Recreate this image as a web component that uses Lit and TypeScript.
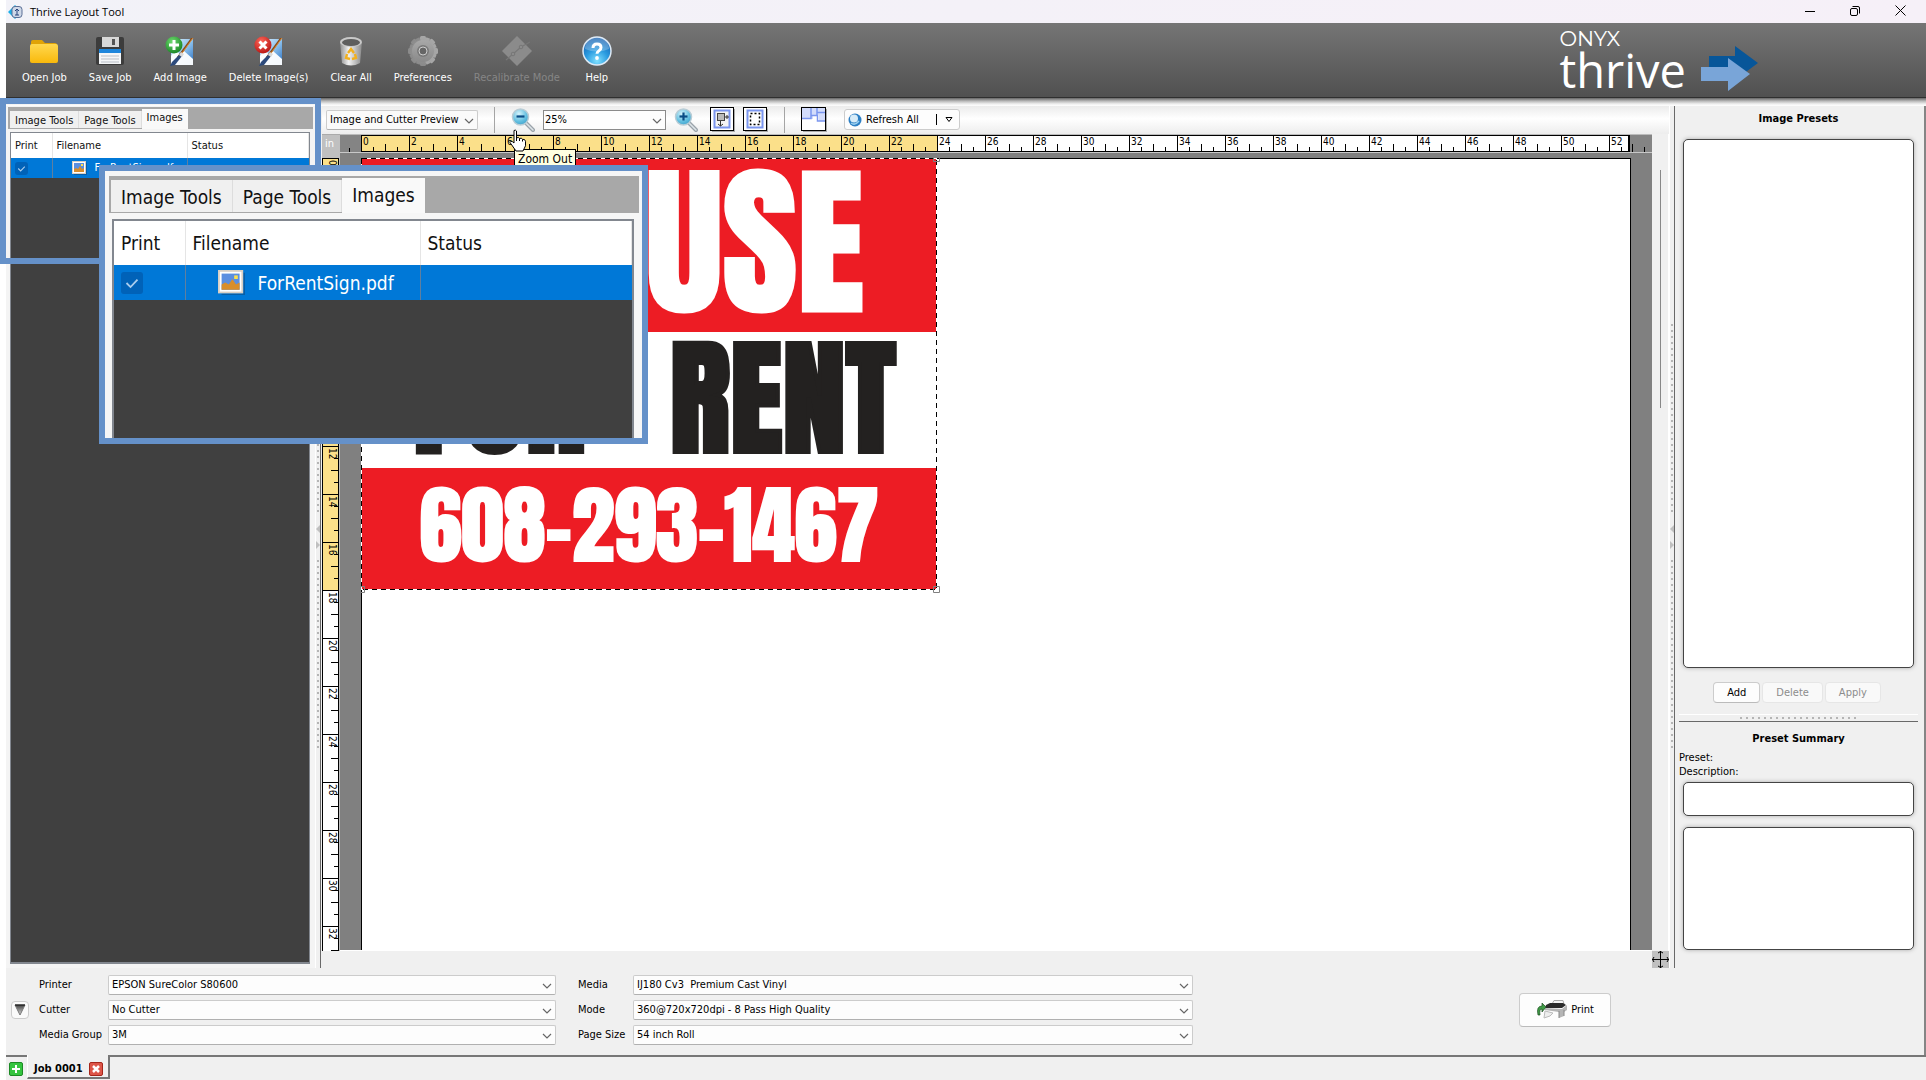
import { LitElement, html, svg, css } from "lit";
import { customElement, state } from "lit/decorators.js";

const chevron = html`<svg class="chev" width="10" height="6" viewBox="0 0 10 6"><path d="M1 1l4 4 4-4" fill="none" stroke="#666" stroke-width="1.2"/></svg>`;

const brush = svg`
  <path d="M6 3h22v26H6z" fill="url(#sky)"/><path d="M6 29V20l5-7 4 6 4-4 9 8v6z" fill="#fff" opacity=".95"/>
  <path d="M28 2L14 22l-2-1L26 2z" fill="#8a4b16"/><path d="M28 2L15 20" stroke="#d98b3a" stroke-width="1"/>
  <path d="M15 18l2 2-7 9-5 1 2-4z" fill="#2c4a7c"/><path d="M16 16l3 2-2 3-3-2z" fill="#d9d9d9"/>`;

const defs = svg`<defs>
  <linearGradient id="sky" x1="0" y1="0" x2="1" y2="1"><stop offset="0" stop-color="#e8f3fc"/><stop offset=".5" stop-color="#8fc3ee"/><stop offset="1" stop-color="#2a6fc0"/></linearGradient>
  <linearGradient id="gold" x1="0" y1="0" x2="0" y2="1"><stop offset="0" stop-color="#ffd84f"/><stop offset="1" stop-color="#f9b90c"/></linearGradient>
  <linearGradient id="tin" x1="0" y1="0" x2="1" y2="0"><stop offset="0" stop-color="#8e8e8e"/><stop offset=".4" stop-color="#f2f2f2"/><stop offset="1" stop-color="#8a8a8a"/></linearGradient>
  <linearGradient id="gear" x1="0" y1="0" x2="0" y2="1"><stop offset="0" stop-color="#a8a8a8"/><stop offset="1" stop-color="#8a8a8a"/></linearGradient>
  <radialGradient id="blue" cx=".5" cy=".85" r=".8"><stop offset="0" stop-color="#7fe0ff"/><stop offset=".5" stop-color="#2a9be0"/><stop offset="1" stop-color="#1560b0"/></radialGradient>
  <radialGradient id="green" cx=".4" cy=".3" r=".8"><stop offset="0" stop-color="#6fdc6f"/><stop offset="1" stop-color="#0f7a1c"/></radialGradient>
  <radialGradient id="red" cx=".4" cy=".3" r=".8"><stop offset="0" stop-color="#ff6a5c"/><stop offset="1" stop-color="#b00a0a"/></radialGradient>
</defs>`;

const icons: Record<string, unknown> = {
  open: svg`<path d="M2 6q0-2 2-2h9l3 3h10q2 0 2 2v2H2z" fill="#e0a307"/><rect x="1" y="8" width="28" height="19" rx="2" fill="url(#gold)"/>`,
  save: svg`<rect x="1" y="1" width="28" height="28" rx="2" fill="#3c3c3c"/><rect x="7" y="1" width="17" height="10" fill="#d8d8d8"/><rect x="17" y="3" width="3" height="6" fill="#555"/><rect x="4" y="13" width="22" height="15" fill="#f4f6f8"/><rect x="4" y="13" width="22" height="4" fill="#1d86dc"/><path d="M6 20h18M6 23h18M6 26h18" stroke="#b9bfc6"/>`,
  add: svg`${brush}<circle cx="9" cy="9" r="8.500" fill="url(#green)"/><path d="M9 4v10M4 9h10" stroke="#fff" stroke-width="3"/>`,
  del: svg`${brush}<circle cx="9" cy="9" r="8.500" fill="url(#red)"/><path d="M5.500 5.500l7 7M12.500 5.500l-7 7" stroke="#fff" stroke-width="3"/>`,
  clear: svg`<path d="M4 6l2 21q9 5 18 0l2-21z" fill="url(#tin)"/><ellipse cx="15" cy="6" rx="11" ry="5" fill="#c9c9c9"/><ellipse cx="15" cy="6.500" rx="9" ry="3.500" fill="#5e5e5e"/><path d="M12 17l3-4 3 4M19 18l1 4-4 1M11 18l-1 4 4 1" fill="none" stroke="#f2b01e" stroke-width="2.400"/>`,
  prefs: svg`<g fill="url(#gear)">${[0, 45, 90, 135].map(a => svg`<rect x="12" y="0" width="6" height="30" rx="1.500" transform="rotate(${a} 15 15)"/>`)}${[22, 67, 112, 157].map(a => svg`<rect x="13" y="1" width="4" height="28" transform="rotate(${a} 15 15)"/>`)}<circle cx="15" cy="15" r="11"/></g><circle cx="15" cy="15" r="6" fill="#7a7a7a"/><circle cx="15" cy="15" r="4" fill="#666" stroke="#cdcdcd"/>`,
  recal: svg`<path d="M15 0l15 15-15 15L0 15z" fill="#8b8b8b"/><path d="M4 24l7-6 8-7 9-5" fill="none" stroke="#777" stroke-width="1.200"/><circle cx="11" cy="18" r="1.800" fill="#8b8b8b" stroke="#777"/><circle cx="19" cy="11" r="1.800" fill="#8b8b8b" stroke="#777"/>`,
  help: svg`<circle cx="15" cy="15" r="14" fill="url(#blue)" stroke="#dce9f5" stroke-width="1.500"/><path d="M3 13a12 12 0 0 1 24 0q-12 5-24 0z" fill="#fff" opacity=".25"/><path d="M11 12q0-4 4-4t4 3.500q0 2-2 3.200t-2 3" fill="none" stroke="#fff" stroke-width="3"/><circle cx="15" cy="22" r="1.900" fill="#fff"/>`,
};

const lens = (plus: boolean) => html`<svg width="24" height="24" viewBox="0 0 24 24">
  <defs><radialGradient id="ln" cx=".4" cy=".3" r=".8"><stop offset="0" stop-color="#d5f3fb"/><stop offset=".6" stop-color="#62bfe0"/><stop offset="1" stop-color="#3b9cc8"/></radialGradient></defs>
  <path d="M15 15l7 7" stroke="#9aa3aa" stroke-width="4" stroke-linecap="round"/><path d="M15 15l7 7" stroke="#dfe5e9" stroke-width="1.500" stroke-linecap="round"/>
  <circle cx="9.500" cy="9" r="8" fill="url(#ln)" stroke="#b9cdd6" stroke-width="1.500"/><path d="M5.500 8.500h8" stroke="#0a4d86" stroke-width="2.200"/>${plus ? svg`<path d="M9.500 4.500v8" stroke="#0a4d86" stroke-width="2.200"/>` : ""}</svg>`;

const photo = html`<svg class="photo" viewBox="0 0 15 14"><path d="M2 13.500h12.500V1.500" fill="none" stroke="#0b4d86" stroke-opacity=".6"/><rect x=".5" y=".5" width="13" height="12" fill="#fff" stroke="#d8cfc4"/><rect x="2" y="2" width="10" height="9" fill="#5b8fe0"/><path d="M2 11V8l2-1 2 1 2-3 2 3 2-1v4z" fill="#d98e2b"/><rect x="9" y="3" width="2" height="2" fill="#ffe14a"/></svg>`;

@customElement("images-panel")
class ImagesPanel extends LitElement {
  static styles = css`
    :host { display: flex; flex-direction: column; box-sizing: border-box; color: #111; font: var(--fs)/var(--lh) "DejaVu Sans Condensed", "Noto Sans", sans-serif; }
    .tabs { display: flex; align-items: flex-end; height: var(--bar); padding-left: 2px; background: #a8a8a8; flex: none; }
    .tab { font: inherit; color: inherit; border: 0; padding: 2px var(--tp) 0; height: var(--tab); background: #f0f0f0; border-right: 1px solid #ddd; margin-bottom: 1px; white-space: nowrap; }
    .tab.on { height: var(--tabon); background: #f9f9f9; margin-bottom: 0; border-right: 0; padding-top: 0; padding-bottom: 2px; }
    .frame { flex: 1; min-height: 0; overflow: hidden; margin: var(--ft) var(--fr) 0 var(--fl); border: var(--fb) solid #82878f; border-bottom-width: var(--bb); background: #404040; }
    table { width: 100%; border-collapse: collapse; table-layout: fixed; }
    .c1 { width: var(--c1); } .c2 { width: var(--c2); }
    th, td { padding: 0 0 0 var(--cp); text-align: left; font-weight: 400; white-space: nowrap; overflow: hidden; border-right: 1px solid #e5e5e5; }
    th { height: var(--hh); background: #fff; }
    td { height: var(--rh); background: #0078d7; color: #fff; border-right-color: #5f7f9f; }
    td:last-child { border-right: 0; }
    td.name { padding-left: var(--np); }
    .file { display: flex; align-items: center; gap: var(--ng); }
    .photo { width: var(--iw); height: auto; flex: none; }
    .box { display: block; appearance: none; margin: 0; width: var(--cb); height: var(--cb); border-radius: 3px; background: #0062b8 url('data:image/svg+xml,<svg xmlns="http://www.w3.org/2000/svg" viewBox="0 0 12 12"><path d="M3 6l2.200 2.200L9 4.200" fill="none" stroke="%23a9cdee"/></svg>') center / 100% no-repeat; }
  `;
  render() {
    return html`<div class="tabs" role="tablist"><button class="tab" role="tab">Image Tools</button><button class="tab" role="tab">Page Tools</button><button class="tab on" role="tab">Images</button></div>
    <div class="frame"><table><colgroup><col class="c1"><col class="c2"><col></colgroup>
      <thead><tr><th>Print</th><th>Filename</th><th>Status</th></tr></thead>
      <tbody><tr><td><input class="box" type="checkbox" checked aria-label="Print ForRentSign.pdf"></td><td class="name"><span class="file">${photo}<span>ForRentSign.pdf</span></span></td><td></td></tr></tbody></table></div>`;
  }
}

@customElement("app-root")
class AppRoot extends LitElement {
  static styles = css`
    :host { display: block; color: #000; font: 11px/14px "DejaVu Sans Condensed", "Noto Sans", sans-serif; }
    * { box-sizing: border-box; }
    button, select, textarea { font: inherit; color: inherit; }
    svg { display: block; }
    .app { position: relative; display: flex; flex-direction: column; height: 100vh; min-height: 760px; padding-left: 6px; background: #fff; overflow: hidden; }
    .title { display: flex; align-items: center; height: 23px; padding: 0 18px 0 2px; background: linear-gradient(90deg, #f2f2f8, #f6f0f8); font: 11px/16px "Open Sans", sans-serif; gap: 6px; }
    .wins { display: flex; gap: 29px; margin-left: auto; padding-bottom: 2px; }
    .winb { border: 0; background: none; padding: 0; width: 16px; height: 16px; display: grid; place-items: center; }
    .tools { display: flex; align-items: flex-start; gap: 22px; height: 75px; padding: 13px 0 0 16px; background: linear-gradient(#757575, #505050); border-bottom: 1px solid #2f2f2f; color: #fff; }
    .tool { border: 0; background: none; padding: 0; display: flex; flex-direction: column; align-items: center; gap: 5px; white-space: nowrap; }
    .tool:disabled { color: #868686; }
    .brand { display: flex; align-items: flex-end; gap: 15px; margin: -7px 168px 0 auto; }
    .words { font-family: "Open Sans", sans-serif; }
    .onyx { font: 21px/20px "Montserrat", "DejaVu Sans", sans-serif; }
    .thrive { font-size: 47px; line-height: 42px; }
    .shade { height: 8px; background: linear-gradient(#666, #bbb 40%, #f0f0f0 75%, #fff); flex: none; }
    .body { flex: 1; min-height: 0; display: flex; background: #f0f0f0; border-right: 2px solid #858585; }
    .side { width: 309px; padding: 1px 2px 4px; background: #f4f4f4; --fs: 11px; --lh: 14px; --bar: 22px; --tab: 17px; --tabon: 20px; --tp: 5px; --ft: 3px; --fl: 2px; --fr: 3px; --fb: 1px; --bb: 2px; --c1: 41px; --c2: 135px; --cp: 4px; --hh: 25px; --rh: 20px; --np: 19px; --ng: 8px; --iw: 15px; --cb: 13px; }
    .split { width: 6px; display: flex; flex-direction: column; justify-content: center; align-items: center; gap: 11px; border-right: 1px solid #696969; border-left: 1px solid #fff; flex: none; }
    .dots { width: 2px; height: 190px; background: repeating-linear-gradient(#b5b5b5 0 2px, transparent 2px 6px); }
    .center { flex: 1; min-width: 0; display: flex; flex-direction: column; padding-left: 1px; }
    .bar { display: flex; align-items: center; height: 28px; padding: 0 0 1px 4px; background: linear-gradient(#ececec, #fff 45%, #ededed); }
    .sel { position: relative; display: block; }
    .sel select { appearance: none; display: block; width: 100%; height: 20px; padding: 0 20px 0 3px; border: 1px solid #ccc; border-bottom-color: #b0b0b0; border-radius: 2px; background: #fdfdfd; }
    .sel .chev { position: absolute; right: 4px; top: 8px; pointer-events: none; }
    .view { width: 152px; } .view select { padding-left: 3px; padding-right: 12px; background: #fafafa; }
    .zoom { width: 123px; } .zoom select { border-color: #8a8a8a; border-radius: 0; padding-left: 1px; }
    .rule { width: 1px; height: 26px; background: #a5a5a5; }
    .icon { border: 0; background: none; padding: 0; }
    .m8 { margin-left: 8px; } .m12 { margin-left: 12px; } .m16 { margin-left: 16px; }
    .refresh { display: flex; align-items: center; height: 21px; margin-left: 17px; border: 1px solid #ccc; border-radius: 3px; background: #fdfdfd; }
    .refresh .icon { display: flex; align-items: center; gap: 4px; padding: 0 0 0 3px; }
    .refresh .more { margin-left: 17px; padding: 0 6px 0 8px; border-left: 1px solid #000; height: 11px; }
    .work { flex: 1; min-height: 0; display: grid; grid-template: 19px 1fr 17px / 18px minmax(0, 1fr) 17px; }
    .unit { background: #c0c0c0; color: #fff; padding: 2px 0 0 3px; border-top: 1px solid #aaa; }
    .rulerh { display: flex; background: #848484; border-top: 1px solid #bbb; border-bottom: 1px solid #c8c8c8; }
    .lead { width: 21px; flex: none; } .tail { width: 22px; flex: none; }
    .scaleh { flex: 1; min-width: 0; border: 1px solid #000; border-right-width: 2px; background: #fff; overflow: hidden; }
    .rulerv { background: #c0c0c0; padding: 5px 1px 0 0; overflow: hidden; }
    .scalev { height: 100%; border: 1px solid #000; border-bottom: 0; background: #fff; overflow: hidden; }
    .num { font: 10px "DejaVu Sans Condensed", sans-serif; }
    .canvas { background: #808080; padding: 5px 21px 0 21px; overflow: hidden; border-bottom: 1px solid #fff; }
    .page { height: 100%; border: 1px solid #000; border-bottom: 0; background: #fff; }
    .sign { margin: -1px 0 0 -1px; overflow: visible; }
    .ink { font-family: "Anton", "Roboto Condensed", sans-serif; font-weight: 400; }
    .scroll { grid-row: 1 / 3; grid-column: 3; padding: 36px 7px 0 8px; border-right: 1px solid #fff; }
    .thumb { height: 238px; background: #888; }
    .blank { grid-column: 1 / 3; }
    .presets { width: 249px; padding: 6px 10px 18px 8px; display: flex; flex-direction: column; flex: none; }
    h2 { margin: 0; font: bold 11px/14px "DejaVu Sans Condensed", sans-serif; text-align: center; }
    .list { border: 1px solid #444; border-radius: 5px; background: #fff; box-shadow: 0 0 4px #aaa; resize: none; padding: 4px; display: block; width: 100%; outline: 0; }
    .grow { flex: 1; margin-top: 13px; min-height: 60px; }
    .desc { height: 34px; margin-top: 3px; } .more2 { height: 123px; margin-top: 11px; }
    .acts { display: flex; justify-content: center; gap: 2px; margin: 14px 3px 11px 0; }
    .btn { height: 21px; border: 1px solid #ccc; border-bottom-color: #bbb; border-radius: 4px; background: #fdfdfd; padding: 0 13px; }
    .btn:disabled { color: #8c8c8c; background: #f9f9f9; border-color: #e6e6e6; }
    .hsplit { height: 8px; margin: 0 -4px 10px; border-top: 1px solid #fff; border-bottom: 1px solid #696969; display: grid; place-items: center; }
    .hdots { width: 117px; height: 2px; background: repeating-linear-gradient(90deg, #b5b5b5 0 2px, transparent 2px 6px); }
    .lines { margin: 5px 0 0 -4px; }
    .setup { display: flex; align-items: center; height: 87px; padding: 0 313px 4px 5px; background: #f0f0f0; border-right: 2px solid #858585; flex: none; }
    .fold { width: 18px; height: 18px; padding: 0; border: 1px solid #ccc; border-radius: 4px; background: #fafafa; display: grid; place-items: center; margin-right: 10px; }
    .fields { display: grid; align-items: center; gap: 5px 0; }
    .f1 { grid-template-columns: 69px 448px; } .f2 { grid-template-columns: 55px 560px; margin-left: 22px; }
    .print { margin-left: auto; height: 34px; padding: 0 16px; display: flex; align-items: center; gap: 4px; }
    .jobs { display: flex; height: 25px; background: #f0f0f0; flex: none; }
    .edge { border-top: 2px solid #777; padding: 5px 4px 0 3px; }
    .job { display: flex; align-items: center; gap: 6px; padding: 6px 5px 0 6px; height: 24px; border-right: 2px solid #777; border-bottom: 2px solid #777; border-left: 1px solid #fff; font-weight: bold; background: #f0f0f0; }
    .rest { flex: 1; border-top: 2px solid #777; }
    .mark { position: absolute; left: 0; top: 98px; width: 321px; height: 166px; border: 6px solid #6591c9; pointer-events: none; }
    .popup { position: absolute; left: 99px; top: 165px; width: 549px; height: 279px; border: 6px solid #6591c9; background: #f6f6f6; padding: 5px 3px 0 4px; --fs: 19px; --lh: 24px; --bar: 37px; --tab: 32px; --tabon: 35px; --tp: 10px; --ft: 6px; --fl: 3px; --fr: 5px; --fb: 2px; --bb: 0px; --c1: 71px; --c2: 235px; --cp: 7px; --hh: 44px; --rh: 35px; --np: 32px; --ng: 13px; --iw: 27px; --cb: 22px; }
    .fill { height: 100%; }
    .tip { position: absolute; left: 514px; top: 149px; height: 19px; padding: 1px 3px; border: 1px solid #000; background: #ffffe1; font-size: 12px; line-height: 16px; }
    .hand { position: absolute; left: 509px; top: 129px; }
  `;

  @state() private tools = [
    ["open", "Open Job"], ["save", "Save Job"], ["add", "Add Image"], ["del", "Delete Image(s)"],
    ["clear", "Clear All"], ["prefs", "Preferences"], ["recal", "Recalibrate Mode"], ["help", "Help"],
  ];

  private combo(id: string, label: string, value: string) {
    return html`<label for=${id}>${label}</label><span class="sel"><select id=${id}><option>${value}</option></select>${chevron}</span>`;
  }

  private ticksH() {
    return svg`<rect x="0" y="0" width="576" height="17" fill="#fbe08a"/>${Array.from({ length: 106 }, (_, i) => {
      const x = i * 12, len = i % 4 === 0 ? 16 : i % 4 === 2 ? 7 : 4;
      return svg`<path d="M${x - 0.5} ${15 - len}v${len}" stroke="#000"/>${i % 4 === 0 ? svg`<text class="num" x="${x + 1}" y="9">${i / 2}</text>` : ""}`;
    })}`;
  }

  private ticksV() {
    return svg`<rect x="0" y="0" width="17" height="432" fill="#fbe08a"/>${Array.from({ length: 67 }, (_, i) => {
      const y = i * 12, len = i % 4 === 0 ? 16 : i % 4 === 2 ? 7 : 4;
      return svg`<path d="M${15 - len} ${y - 0.5}h${len}" stroke="#000"/>${i % 4 === 0 ? svg`<text class="num" transform="translate(6 ${y + 1}) rotate(90)">${i / 2}</text>` : ""}`;
    })}`;
  }

  private split() {
    return html`<div class="split"><div class="dots"></div><svg width="4" height="24" viewBox="0 0 4 24"><path d="M4 0v8L0 4zM0 16v8l4-4z" fill="#c0c0c0"/></svg><div class="dots"></div></div>`;
  }

  render() {
    return html`<div class="app">
      <header class="title">
        <svg width="16" height="16" viewBox="0 0 16 16"><path d="M0 8l7-7 7 7-7 7z" fill="#1cb0e8"/><rect x="4" y="2.500" width="10" height="11" rx="3" fill="#cfd8e8" stroke="#5a6f96"/><path d="M9 5v6M7 7l2-2 2 2M7 11h4" fill="none" stroke="#26427c"/></svg>
        <span>Thrive Layout Tool</span>
        <div class="wins">
          <button class="winb" aria-label="Minimize"><svg width="10" height="10"><path d="M0 5.500h10" stroke="#000"/></svg></button>
          <button class="winb" aria-label="Restore"><svg width="10" height="10"><path d="M2.500 .5H8q1.500 0 1.500 1.500V7.500" fill="none" stroke="#000"/><rect x=".5" y="2.500" width="7" height="7" rx="1.500" fill="none" stroke="#000"/></svg></button>
          <button class="winb" aria-label="Close"><svg width="11" height="11"><path d="M.5 .5l10 10M10.500 .5l-10 10" stroke="#000"/></svg></button>
        </div>
      </header>
      <nav class="tools">
        ${this.tools.map(([k, t]) => html`<button class="tool" ?disabled=${k === "recal"}><svg width="30" height="30" viewBox="0 0 30 30">${defs}${icons[k]}</svg><span>${t}</span></button>`)}
        <div class="brand"><div class="words"><div class="onyx">ONYX</div><div class="thrive">thrive</div></div>
          <svg width="57" height="45" viewBox="0 0 57 45"><path d="M8 10h26V0l23 17-23 17V24H8z" fill="#075699"/><path d="M0 21h27V12l22 16-22 17V35H0z" fill="#79a5d8"/></svg></div>
      </nav>
      <div class="shade"></div>
      <main class="body">
        <aside class="side"><images-panel class="fill"></images-panel></aside>
        ${this.split()}
        <section class="center">
          <div class="bar">
            <span class="sel view"><select aria-label="View"><option>Image and Cutter Preview</option></select>${chevron}</span>
            <span class="rule m16"></span>
            <button class="icon m16" aria-label="Zoom out">${lens(false)}</button>
            <span class="sel zoom m8"><select aria-label="Zoom"><option>25%</option></select>${chevron}</span>
            <button class="icon m8" aria-label="Zoom in">${lens(true)}</button>
            <button class="icon m12" aria-label="Fit to window"><svg width="25" height="25"><rect x="2" y="2" width="23" height="23" fill="#aaa"/><rect x=".5" y=".5" width="23" height="23" fill="#fff" stroke="#000"/><rect x="4.500" y="3.500" width="15" height="17" fill="#f4f4f4" stroke="#7b96ef" stroke-width="2"/><rect x="7.500" y="6.500" width="7" height="7" fill="#bbb" stroke="#444"/><path d="M15 10h4M17 8v4M10.500 14v5M8 17l2.500 2 2.500-2" fill="none" stroke="#333"/></svg></button>
            <button class="icon m8" aria-label="Fit selection"><svg width="25" height="25"><rect x="2" y="2" width="23" height="23" fill="#aaa"/><rect x=".5" y=".5" width="23" height="23" fill="#fff" stroke="#000"/><rect x="4.500" y="3.500" width="15" height="17" fill="#fff" stroke="#7b96ef" stroke-width="2"/><rect x="7.500" y="6.500" width="9" height="11" fill="none" stroke="#000" stroke-width="1.500" stroke-dasharray="2 2"/></svg></button>
            <span class="rule m16"></span>
            <button class="icon m16" aria-label="Tile layout"><svg width="26" height="25"><rect x="2" y="2" width="24" height="23" fill="#aaa"/><rect x=".5" y=".5" width="24" height="23" fill="#fff" stroke="#000"/><path d="M1 1h23v13h-6V8h-6v4H1z" fill="#d3dcfb"/><path d="M1 11.500h9V1M10 8.500h6V1M16.500 8v6H24M16 5.500h8" fill="none" stroke="#7b96ef" stroke-width="1.500"/></svg></button>
            <div class="refresh"><button class="icon"><svg width="14" height="14"><circle cx="7" cy="7" r="6.500" fill="#2d7fc4"/><circle cx="6" cy="5.500" r="4" fill="#d8ecf8"/><path d="M3 10q4 3 8-2" fill="none" stroke="#9bd0ef" stroke-width="1.500"/></svg>Refresh All</button>
              <button class="icon more" aria-label="Refresh options"><svg width="8" height="5"><path d="M1 .5h6L4 4.500z" fill="#fff" stroke="#000"/></svg></button></div>
          </div>
          <div class="work">
            <div class="unit">in</div>
            <div class="rulerh"><svg class="lead" height="17"><path d="M9.500 13v4" stroke="#000"/></svg><div class="scaleh"><svg width="100%" height="15">${this.ticksH()}</svg></div><svg class="tail" height="17"><path d="M2.500 9v8M14.500 12v5" stroke="#000"/></svg></div>
            <div class="scroll"><div class="thumb"></div></div>
            <div class="rulerv"><div class="scalev"><svg width="15" height="100%">${this.ticksV()}</svg></div></div>
            <div class="canvas"><div class="page">
              <svg class="sign" width="576" height="432">
                <rect width="576" height="174" fill="#ed1c24"/><rect y="310" width="576" height="122" fill="#ed1c24"/>
                <text class="ink" x="503" y="153" text-anchor="end" font-size="162" fill="#fff" stroke="#fff" stroke-width="3">HOUSE</text>
                <text class="ink" x="52" y="294" font-size="127" fill="#232120" stroke="#232120" stroke-width="4">FOR</text>
                <text class="ink" x="535" y="294" text-anchor="end" font-size="127" fill="#232120" stroke="#232120" stroke-width="4">RENT</text>
                <text class="ink" x="288" y="403" text-anchor="middle" font-size="85" fill="#fff" stroke="#fff" stroke-width="2">608-293-1467</text>
                <rect x=".5" y=".5" width="575" height="431" fill="none" stroke="#fff"/><rect x=".5" y=".5" width="575" height="431" fill="none" stroke="#000" stroke-dasharray="5 4" shape-rendering="crispEdges"/>
                <path d="M572.500 0v3.500h6V0M0 428.500h3.500v6H0M572.500 428.500h6v6h-6z" fill="none" stroke="#808080"/>
              </svg></div></div>
            <div class="blank"></div>
            <svg width="17" height="17"><rect width="17" height="17" fill="#c0c0c0"/><path d="M8.500 0v17M0 8.500h17M6 2l2.500-1.500L11 2M6 15l2.500 1.500L11 15M2 6L.5 8.500 2 11M15 6l1.500 2.500L15 11" fill="none" stroke="#000"/></svg>
          </div>
        </section>
        ${this.split()}
        <aside class="presets">
          <h2>Image Presets</h2>
          <textarea class="list grow" aria-label="Image presets"></textarea>
          <div class="acts"><button class="btn">Add</button><button class="btn" disabled>Delete</button><button class="btn" disabled>Apply</button></div>
          <div class="hsplit"><div class="hdots"></div></div>
          <h2>Preset Summary</h2>
          <div class="lines"><div>Preset:</div><label for="desc">Description:</label></div>
          <textarea id="desc" class="list desc"></textarea>
          <textarea class="list more2" aria-label="Preset details"></textarea>
        </aside>
      </main>
      <section class="setup">
        <button class="fold" aria-label="Collapse settings"><svg width="12" height="12"><defs><linearGradient id="tri" x2="0" y2="1"><stop stop-color="#444"/><stop offset="1" stop-color="#ddd"/></linearGradient></defs><path d="M1 1h10L6 11z" fill="url(#tri)" stroke="#777"/><path d="M1 1h10" stroke="#000"/></svg></button>
        <div class="fields f1">${this.combo("pr", "Printer", "EPSON SureColor S80600")}${this.combo("cu", "Cutter", "No Cutter")}${this.combo("mg", "Media Group", "3M")}</div>
        <div class="fields f2">${this.combo("me", "Media", "IJ180 Cv3 \u00a0Premium Cast Vinyl")}${this.combo("mo", "Mode", "360@720x720dpi - 8 Pass High Quality")}${this.combo("ps", "Page Size", "54 inch Roll")}</div>
        <button class="btn print"><svg width="31" height="19" viewBox="0 0 31 19"><path d="M16 4l2-3.500h9l1 3.500z" fill="#f5f5f5" stroke="#aaa"/><path d="M10 5l4-2h13l3 2-4 3H9z" fill="#2b2b2b"/><path d="M8 8l18 1 5-4v5l-3 2v4l-5 2v-6L9 10z" fill="#b5b5b5"/><path d="M23 11v7M28 10v6" stroke="#888"/><path d="M9 11l8 2-3 3-6 2z" fill="#eee" stroke="#bbb"/><path d="M2 15q-2-9 4-9V3l4 4-4 5V9q-3 0-2 6z" fill="#3f9a45" stroke="#1d4d22" stroke-width=".7"/></svg>Print</button>
      </section>
      <footer class="jobs">
        <div class="edge"><button class="icon" aria-label="New job"><svg width="14" height="14"><rect x=".5" y=".5" width="13" height="13" rx="1.500" fill="#35c43f" stroke="#1c8a25"/><path d="M7 3v8M3 7h8" stroke="#fff" stroke-width="2"/></svg></button></div>
        <div class="job"><span>Job 0001</span><button class="icon" aria-label="Close job"><svg width="14" height="14"><rect x=".5" y=".5" width="13" height="13" rx="1.500" fill="#dd5548" stroke="#a5261b"/><path d="M4 4l6 6M10 4l-6 6" stroke="#fff" stroke-width="2.500"/></svg></button></div>
        <div class="rest"></div>
      </footer>
      <div class="tip" role="tooltip">Zoom Out</div>
      <svg class="hand" width="18" height="23" viewBox="0 0 18 23"><path d="M5 1.500q1.500-1 2.500.5v7q2-1.500 3 .5 2-1 3 .8 2.500-.5 3 2v4.500L14 22H7L1 13.500q.5-2 2.500-.8L5 14z" fill="#fff" stroke="#000"/><path d="M7.500 9v3M10.500 9.500V12M13.500 10.500v2" stroke="#000"/></svg>
      <div class="mark"></div>
      <div class="popup"><images-panel class="fill"></images-panel></div>
    </div>`;
  }
}
